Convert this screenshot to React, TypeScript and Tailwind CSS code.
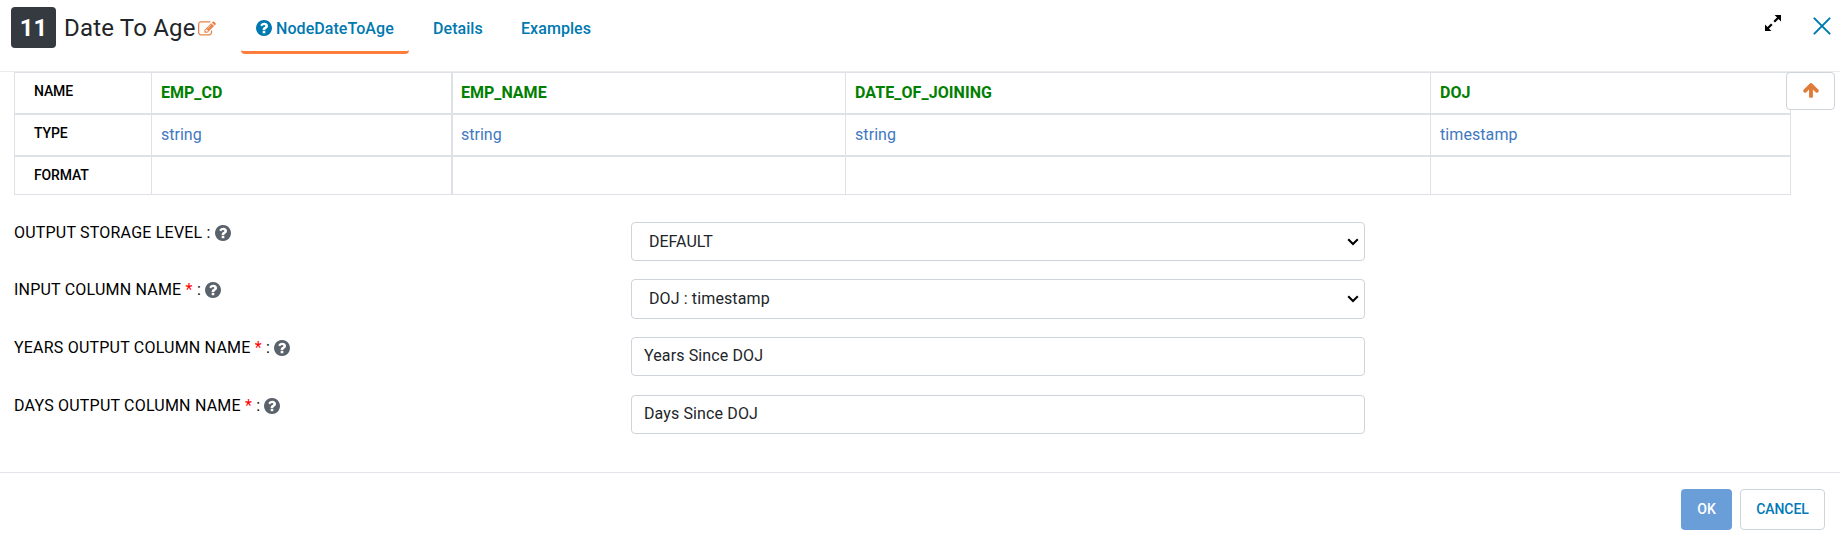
const columns = [
  { name: "EMP_CD", type: "string", edge: "border-r pl-[9px]" },
  { name: "EMP_NAME", type: "string", edge: "pl-2" },
  { name: "DATE_OF_JOINING", type: "string", edge: "pl-[9px] tracking-[0.08px]" },
  { name: "DOJ", type: "timestamp", edge: "pl-[9px] tracking-[0.08px]" },
];

function QuestionIcon({ className }: { className: string }) {
  return (
    <svg viewBox="128 128 1536 1536" fill="currentColor" className={className}>
      <path d="M1024 1376v-192q0-14-9-23t-23-9h-192q-14 0-23 9t-9 23v192q0 14 9 23t23 9h192q14 0 23-9t9-23zm256-672q0-88-55.5-163t-138.5-116-170-41q-243 0-371 213-15 24 8 42l132 100q7 6 19 6 16 0 25-12 53-68 86-92 34-24 86-24 48 0 85.5 26t37.5 59q0 38-20 61t-68 45q-63 28-115.5 86.5t-52.5 125.5v36q0 14 9 23t23 9h192q14 0 23-9t9-23q0-19 21.5-49.5t54.5-49.5q32-18 49-28.5t46-35 44.5-48 28-60.5 12.5-81zm384 192q0 209-103 385.5t-279.5 279.5-385.5 103-385.5-103-279.5-279.5-103-385.5 103-385.5 279.5-279.5 385.5-103 385.5 103 279.5 279.5 103 385.5z" />
    </svg>
  );
}

function EditIcon() {
  return (
    <svg viewBox="0 0 1792 1792" fill="currentColor" className="mt-px ml-[2px] size-[18px] shrink-0 text-[#e8844a]">
      <path d="M888 1184l116-116-152-152-116 116v56h96v96h56zm440-720q-16-16-33 1l-350 350q-17 17-1 33t33-1l350-350q17-17 1-33zm80 594v190q0 119-84.5 203.5t-203.5 84.5h-832q-119 0-203.5-84.5t-84.5-203.5v-832q0-119 84.5-203.5t203.5-84.5h832q63 0 117 25 15 7 18 23 3 17-9 29l-49 49q-14 14-32 8-23-6-45-6h-832q-66 0-113 47t-47 113v832q0 66 47 113t113 47h832q66 0 113-47t47-113v-126q0-13 9-22l64-64q15-15 35-7t20 29zm-96-738l288 288-672 672h-288v-288zm444 132l-92 92-288-288 92-92q28-28 68-28t68 28l152 152q28 28 28 68t-28 68z" />
    </svg>
  );
}

function ArrowUpIcon() {
  return (
    <svg viewBox="0 0 1792 1792" fill="currentColor" className="-mt-0.5 size-[18px] text-[#e07b39]">
      <path d="M1675 971q0 51-37 90l-75 75q-38 38-91 38-54 0-90-38l-294-293v704q0 52-37.5 84.5t-90.5 32.5h-128q-53 0-90.5-32.5t-37.5-84.5v-704l-294 293q-36 38-90 38t-90-38l-75-75q-38-38-38-90 0-53 38-91l651-651q35-37 90-37 54 0 91 37l651 651q37 39 37 91z" />
    </svg>
  );
}

function ExpandIcon() {
  return (
    <svg viewBox="0 0 16 16" className="mt-[15px] size-4">
      <path d="M9.6 0H16v6.4zM0 9.4V16h6.4z" fill="black" />
      <path d="M13.5 2.5 9.2 6.8M6.8 9.2 2.5 13.5" stroke="black" strokeWidth="2.2" />
    </svg>
  );
}

function CloseIcon() {
  return (
    <svg viewBox="0 0 18 18" className="mt-[17px] size-[18px]">
      <path d="M1.4 1.4 16.6 16.6M16.6 1.4 1.4 16.6" stroke="#0079b0" strokeWidth="2" strokeLinecap="round" />
    </svg>
  );
}

function Chevron() {
  return (
    <svg viewBox="0 0 12 8" className="h-2 w-3" fill="none">
      <path d="M1.2 1.2 6 6 10.8 1.2" stroke="black" strokeWidth="2" />
    </svg>
  );
}

function FieldLabel({ text, required }: { text: string; required?: boolean }) {
  return (
    <div className="flex h-[22px] w-[617px] items-center">
      <span className="text-base leading-5 tracking-[0.21px] text-black">
        {text} {required && <span className="text-[#ff0000]">* </span>}:
      </span>
      <QuestionIcon className="-mt-px ml-1 size-4 text-[#5a626b]" />
    </div>
  );
}

function RowHeading({ text }: { text: string }) {
  return (
    <div className="border-t border-b border-l border-[#dee2e6] pt-2 pl-[19px] text-sm leading-5 font-medium tracking-[-0.15px] text-black">
      {text}
    </div>
  );
}

export default function App() {
  return (
    <div className="flex h-[540px] w-[1840px] flex-col overflow-hidden bg-white font-['Roboto',sans-serif] text-[#212529]">
      <header className="flex h-[72px] shrink-0 items-start border-b border-[#e9ecef] pl-[11px]">
        <div className="mt-[7px] flex h-[41px] w-[45px] items-center justify-center rounded bg-[#343a40] text-2xl font-bold text-white">
          11
        </div>
        <div className="mt-[13px] ml-2 flex h-[30px] w-[177px] items-center">
          <h1 className="text-2xl leading-[30px] tracking-[0.2px] whitespace-nowrap">Date To Age</h1>
          <EditIcon />
        </div>
        <nav className="flex text-base leading-6 font-medium tracking-[0.06px] text-[#0079b0]">
          <a className="flex h-[54px] w-[168px] items-start rounded-sm border-b-[3px] border-[#fd7e3b] pt-[17px] pl-[15px]">
            <QuestionIcon className="mt-[3px] mr-1 size-4" />
            NodeDateToAge
          </a>
          <a className="w-[89px] pt-[17px] pl-6">Details</a>
          <a className="pt-[17px] pl-[23px]">Examples</a>
        </nav>
        <div className="ml-auto flex items-start gap-8 pr-[9px]">
          <ExpandIcon />
          <CloseIcon />
        </div>
      </header>

      <section className="flex h-[123px] shrink-0 pl-[14px]">
        <div className="grid w-[1776px] grid-cols-[137px_301px_393px_585px_360px] grid-rows-[42px_42px_39px]">
          <RowHeading text="NAME" />
          {columns.map((c) => (
            <div key={c.name} className={`${c.edge} border-t border-b border-l border-[#dee2e6] pt-2 text-base leading-6 font-bold text-[#008000]`}>
              {c.name}
            </div>
          ))}
          <RowHeading text="TYPE" />
          {columns.map((c) => (
            <div key={c.name} className={`${c.edge} border-t border-b border-l border-[#dee2e6] pt-2 text-base leading-6 text-[#3f78bf]`}>
              {c.type}
            </div>
          ))}
          <RowHeading text="FORMAT" />
          {columns.map((c) => (
            <div key={c.name} className={`${c.edge} border-t border-b border-l border-[#dee2e6]`} />
          ))}
        </div>
        <div className="w-px bg-[#dee2e6]" />
        <button className="relative -ml-[5px] flex h-[38px] w-[49px] items-center justify-center rounded border border-[#ced4da] bg-white">
          <ArrowUpIcon />
        </button>
      </section>

      <form className="flex h-[277px] shrink-0 flex-col pt-[27px] pl-[14px] text-base">
        <div className="flex h-[57px]">
          <FieldLabel text="OUTPUT STORAGE LEVEL" />
          <div className="flex h-[39px] w-[734px] items-center justify-between rounded border border-[#ced4da] pr-[5px] pl-[17px]">
            DEFAULT
            <Chevron />
          </div>
        </div>
        <div className="flex h-[58px]">
          <FieldLabel text="INPUT COLUMN NAME" required />
          <div className="flex h-[40px] w-[734px] items-center justify-between rounded border border-[#ced4da] pr-[5px] pl-[17px] tracking-[0.12px]">
            DOJ : timestamp
            <Chevron />
          </div>
        </div>
        <div className="flex h-[58px]">
          <FieldLabel text="YEARS OUTPUT COLUMN NAME" required />
          <div className="flex h-[39px] w-[734px] items-center rounded border border-[#ced4da] pb-px pl-3 tracking-[0.12px]">
            Years Since DOJ
          </div>
        </div>
        <div className="flex">
          <FieldLabel text="DAYS OUTPUT COLUMN NAME" required />
          <div className="flex h-[39px] w-[734px] items-center rounded border border-[#ced4da] pb-[2px] pl-3 tracking-[0.12px]">
            Days Since DOJ
          </div>
        </div>
      </form>

      <footer className="flex flex-1 justify-end gap-2 border-t border-[#e3e7ec] pt-4 pr-[15px] text-sm font-medium">
        <button className="h-[41px] w-[51px] rounded bg-[#6a9ed9] pb-px text-white">OK</button>
        <button className="h-[41px] w-[85px] rounded border border-[#ced4da] pb-px tracking-[-0.1px] text-[#0079b8]">CANCEL</button>
      </footer>
    </div>
  );
}
